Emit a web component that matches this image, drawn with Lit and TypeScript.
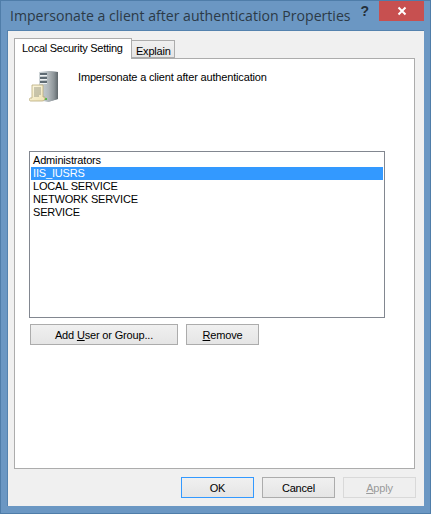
import { LitElement, html, css, svg } from "lit";
import { customElement } from "lit/decorators.js";

const serverIcon = svg`
<svg class="icon" width="32" height="34" viewBox="0 0 32 34">
  <defs>
    <linearGradient id="side" x1="0" x2="1" y1="0" y2="0"><stop offset="0" stop-color="#b4babd"/><stop offset="0.600" stop-color="#8c9498"/><stop offset="1" stop-color="#5f676b"/></linearGradient>
    <linearGradient id="front" x1="0" x2="1" y1="0" y2="0"><stop offset="0" stop-color="#cfd5d8"/><stop offset="1" stop-color="#8f999f"/></linearGradient>
    <linearGradient id="paper" x1="0" x2="1" y1="0" y2="1"><stop offset="0" stop-color="#fdf8e2"/><stop offset="1" stop-color="#eee2b4"/></linearGradient>
  </defs>
  <path d="M10 2 L19 1 L29 2 L29 29 L19 32 L10 30Z" fill="url(#front)"/>
  <path d="M19 1 L29 2 L29 29 L19 32Z" fill="url(#side)"/>
  <path d="M11 3H18V5H11ZM11 7H18V9H11ZM11 11H18V13H11Z" fill="#5f6b73"/>
  <path d="M11 5.500H18M11 9.500H18M11 13.500H18" stroke="#eef1f2"/>
  <rect x="16" y="28" width="2" height="2" fill="#58b84a"/>
  <path d="M3 15 H14 V27 H16 C16 30 15 31 13 31 H1.500 C0 31 0 28 1.500 28 H3Z" fill="url(#paper)" stroke="#b8aa78" stroke-width="0.800"/>
  <path d="M5 18H12M5 20H12M5 22H12M5 24H12M5 26H10" stroke="#9a9a86"/>
</svg>`;

@customElement("app-root")
export class AppRoot extends LitElement {
  static styles = css`
    :host { display: block; width: 431px; height: 514px; font-family: "Liberation Sans", Arial, sans-serif; font-size: 11px; letter-spacing: -0.170px; color: #000; }
    .window { box-sizing: border-box; width: 431px; height: 514px; background: #6b97c3; border: 1px solid #4f7da9; display: flex; flex-direction: column; }
    .titlebar { height: 29px; display: flex; align-items: flex-start; flex: none; }
    .title { margin: 5px 0 0 9px; font-family: "Open Sans", sans-serif; font-size: 14.100px; letter-spacing: 0; line-height: 20px; color: #2b3a47; white-space: nowrap; flex: 1; }
    .help { margin: 1px 10px 0 0; font: bold 14px/18px "Liberation Sans", sans-serif; color: #25303a; }
    .close { width: 45px; height: 20px; margin-right: 6px; background: #c75050; display: flex; align-items: center; justify-content: center; }
    .client { flex: 1; margin: 0 6px 7px 6px; background: #f0f0f0; padding: 7px 7px 7px 6px; display: flex; flex-direction: column; border-top: 1px solid #5482ae; border-left: 1px solid #5482ae; }
    .tabs { display: flex; align-items: flex-end; height: 20px; flex: none; position: relative; z-index: 1; }
    .tab { box-sizing: border-box; width: 43px; border: 1px solid #acacac; background: linear-gradient(#f0f0f0, #e5e5e5); height: 18px; padding: 3px 0 0 4px; border-left: none; line-height: 14px; white-space: nowrap; letter-spacing: -0.220px; }
    .tab.active { background: #fff; height: 21px; width: 118px; border-left: 1px solid #acacac; border-bottom: none; margin-bottom: -1px; padding: 2px 0 0 7px; letter-spacing: -0.260px; }
    .panel { flex: none; box-sizing: border-box; height: 411px; width: 401px; background: #fff; border: 1px solid #acacac; padding: 0 29px 0 14px; }
    .head { display: flex; gap: 17px; height: 92px; padding-top: 10px; box-sizing: border-box; }
    .head span { margin-top: 1px; line-height: 14px; }
    .icon { display: block; margin-top: 1px; }
    .list { box-sizing: border-box; width: 356px; height: 167px; border: 1px solid #828790; padding: 2px 1px; }
    .row { height: 13px; line-height: 13px; padding-left: 2px; white-space: nowrap; }
    .row.sel { background: #3399ff; color: #fff; }
    .actions { display: flex; gap: 8px; margin: 6px 0 0 1px; }
    .btn { box-sizing: border-box; height: 21px; border: 1px solid #acacac; background: linear-gradient(#f0f0f0, #e5e5e5); display: flex; align-items: center; justify-content: center; white-space: pre; line-height: 14px; }
    .wide { width: 148px; }
    .std { width: 73px; }
    .footer { display: flex; justify-content: flex-end; gap: 8px; margin: 8px 1px 0 0; }
    .default { border-color: #3399ff; }
    .disabled { color: #9a9a9a; background: #efefef; border-color: #d9d9d9; }
    u { text-underline-offset: 1px; }
  `;

  render() {
    const rows = ["Administrators", "IIS_IUSRS", "LOCAL SERVICE", "NETWORK SERVICE", "SERVICE"];
    return html`
      <div class="window">
        <div class="titlebar">
          <div class="title">Impersonate a client after authentication Properties</div>
          <div class="help">?</div>
          <div class="close">
            <svg width="10" height="10" viewBox="0 0 10 10"><path d="M1.500 1.500 L8.500 8.500 M8.500 1.500 L1.500 8.500" stroke="#fff" stroke-width="2"/></svg>
          </div>
        </div>
        <div class="client">
          <div class="tabs">
            <div class="tab active">Local Security Setting</div>
            <div class="tab">Explain</div>
          </div>
          <div class="panel">
            <div class="head">${serverIcon}<span>Impersonate a client after authentication</span></div>
            <div class="list">
              ${rows.map((r, i) => html`<div class="row ${i === 1 ? "sel" : ""}">${r}</div>`)}
            </div>
            <div class="actions">
              <div class="btn wide">Add <u>U</u>ser or Group...</div>
              <div class="btn std"><u>R</u>emove</div>
            </div>
          </div>
          <div class="footer">
            <div class="btn std default">OK</div>
            <div class="btn std">Cancel</div>
            <div class="btn std disabled"><u>A</u>pply</div>
          </div>
        </div>
      </div>
    `;
  }
}
